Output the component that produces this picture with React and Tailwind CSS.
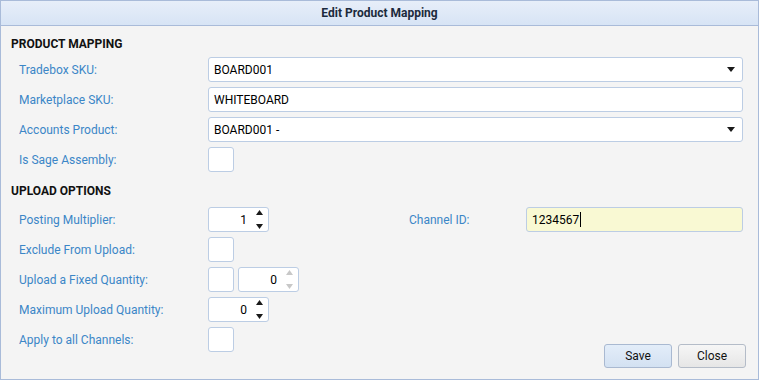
import React from "react";

const font = { fontFamily: "Roboto, 'Liberation Sans', sans-serif" };

function Caret({ className = "" }) {
  return (
    <svg width="8" height="5" viewBox="0 0 8 5" className={className}>
      <path d="M0 0 L8 0 L4 5 Z" fill="#1a1a1a" />
    </svg>
  );
}

function Label({ children, w = "w-[197px]" }) {
  return (
    <div className={`${w} shrink-0 pl-[8px] pt-[1px] text-[12px] text-[#3b86c7] leading-[25px]`}>{children}</div>
  );
}

function Select({ value }) {
  return (
    <div className="flex-1 h-[25px] flex items-center justify-between pl-[5px] pr-[7px] bg-white border border-[#bccde4] rounded-[3px] text-[12px] text-black">
      <span>{value}</span>
      <Caret />
    </div>
  );
}

function TextBox({ value, className = "bg-white", cursor = false }) {
  return (
    <div className={`flex-1 h-[25px] flex items-center pl-[5px] border border-[#bccde4] rounded-[3px] text-[12px] text-black ${className}`}>
      <span>{value}</span>
      {cursor && <span className="inline-block w-[1px] h-[15px] bg-black ml-[1px]" />}
    </div>
  );
}

function Check() {
  return <div className="w-[26px] h-[25px] bg-white border border-[#bccde4] rounded-[3px] shrink-0" />;
}

function Spinner({ value, disabled = false }) {
  const c = disabled ? "#c8c8c8" : "#1a1a1a";
  return (
    <div className="w-[61px] h-[25px] shrink-0 flex items-center justify-end bg-white border border-[#bccde4] rounded-[3px] text-[12px] text-black">
      <span className="mr-[9px]">{value}</span>
      <div className="flex flex-col justify-between h-[19px] mr-[5px]">
        <svg width="7" height="5" viewBox="0 0 7 5"><path d="M0 5 L7 5 L3.5 0 Z" fill={c} /></svg>
        <svg width="7" height="5" viewBox="0 0 7 5"><path d="M0 0 L7 0 L3.5 5 Z" fill={c} /></svg>
      </div>
    </div>
  );
}

function Row({ children, className = "" }) {
  return <div className={`flex items-start h-[25px] mb-[5px] ${className}`}>{children}</div>;
}

export default function App() {
  return (
    <div style={font} className="w-[759px] h-[380px] bg-[#f4f4f4] border border-[#a9bbd9] flex flex-col overflow-hidden">
      <div className="h-[25px] shrink-0 border-b border-[#a9bbd9] bg-gradient-to-b from-[#e7eef9] to-[#d7e4f5] flex items-center justify-center">
        <span className="text-[12px] font-bold text-[#1c2a3c]">Edit Product Mapping</span>
      </div>
      <div className="flex-1 flex flex-col pl-[10px] pr-[15px] pt-[7px]">
        <div className="h-[20px] pt-[1px] leading-[20px] text-[12px] font-bold text-[#111] mb-[4px]">PRODUCT MAPPING</div>
        <Row>
          <Label>Tradebox SKU:</Label>
          <Select value="BOARD001" />
        </Row>
        <Row>
          <Label>Marketplace SKU:</Label>
          <TextBox value="WHITEBOARD" />
        </Row>
        <Row>
          <Label>Accounts Product:</Label>
          <Select value="BOARD001 -" />
        </Row>
        <Row>
          <Label>Is Sage Assembly:</Label>
          <Check />
        </Row>
        <div className="h-[20px] pt-[1px] leading-[20px] text-[12px] font-bold text-[#111] mt-[3px] mb-[7px]">UPLOAD OPTIONS</div>
        <Row>
          <Label>Posting Multiplier:</Label>
          <Spinner value="1" />
          <div className="w-[140px] shrink-0" />
          <div className="w-[117px] shrink-0 pt-[1px] text-[12px] text-[#3b86c7] leading-[25px]">Channel ID:</div>
          <TextBox value="1234567" className="bg-[#f9f9d3]" cursor />
        </Row>
        <Row>
          <Label>Exclude From Upload:</Label>
          <Check />
        </Row>
        <Row>
          <Label>Upload a Fixed Quantity:</Label>
          <Check />
          <div className="ml-[4px]">
            <Spinner value="0" disabled />
          </div>
        </Row>
        <Row>
          <Label>Maximum Upload Quantity:</Label>
          <Spinner value="0" />
        </Row>
        <Row>
          <Label>Apply to all Channels:</Label>
          <Check />
          <div className="ml-auto mr-[-3px] mt-[17px] flex gap-[6px]">
            <button className="w-[68px] h-[24px] border border-[#a9b9d1] rounded-[3px] bg-gradient-to-b from-[#e3edf9] to-[#d3e1f2] text-[12px] text-[#111]">Save</button>
            <button className="w-[68px] h-[24px] border border-[#b4bcc8] rounded-[3px] bg-gradient-to-b from-[#f6f6f6] to-[#e6e6e6] text-[12px] text-[#111]">Close</button>
          </div>
        </Row>
      </div>
    </div>
  );
}
